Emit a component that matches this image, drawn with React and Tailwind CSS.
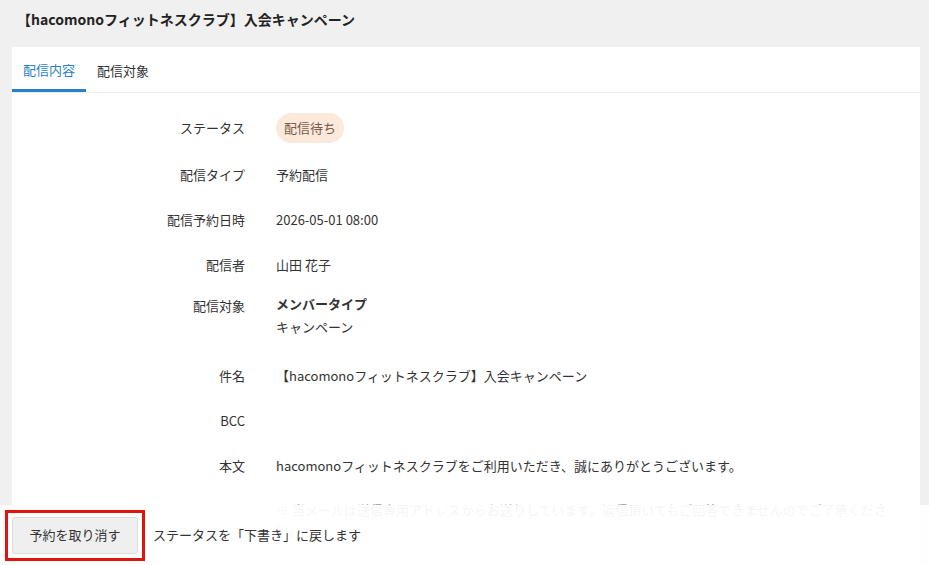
import React from 'react';

const rows = [
  { label: 'ステータス', value: <span className="inline-block rounded-full bg-[#fbe9dc] px-2 py-[5px] text-[#7a5a48]">配信待ち</span>, h: 'h-[48px]' },
  { label: '配信タイプ', value: '予約配信' },
  { label: '配信予約日時', value: '2026-05-01 08:00' },
  { label: '配信者', value: '山田 花子' },
];

const Row = ({ label, children, h = 'h-[45px]' }) => (
  <div className={`flex items-center ${h}`}>
    <div className="w-[233px] text-right">{label}</div>
    <div className="pl-[31px]">{children}</div>
  </div>
);

const App = () => {
  return (
    <div className="relative h-[565px] w-[929px] overflow-hidden bg-[#f0f0f0] text-[13px] text-[#333]" style={{ fontFamily: '"Noto Sans CJK JP", "Noto Sans", sans-serif' }}>
      <div className="h-[47px] px-[17px] pt-[9px] text-[14px] font-bold text-[#222]">【hacomonoフィットネスクラブ】入会キャンペーン</div>
      <div className="mx-[12px] mr-[9px] bg-white">
        <div className="flex h-[46px] border-b border-[#eee]">
          <div className="flex w-[74px] items-center justify-center border-b-[3px] border-[#2a7fc9] pt-[3px] text-[#2a7fc9]">配信内容</div>
          <div className="flex items-center px-[11px] pt-[3px]">配信対象</div>
        </div>
        <div className="pt-[11px] pb-[40px]">
          {rows.map((r) => (
            <Row key={r.label} label={r.label} h={r.h}>{r.value}</Row>
          ))}
          <div className="flex pt-[9px] pb-[15px]">
            <div className="w-[233px] text-right">配信対象</div>
            <div className="pl-[31px] leading-[23px]">
              <div className="-mt-[4px] font-bold">メンバータイプ</div>
              <div>キャンペーン</div>
            </div>
          </div>
          <Row label="件名">【hacomonoフィットネスクラブ】入会キャンペーン</Row>
          <Row label="BCC"></Row>
          <Row label="本文">hacomonoフィットネスクラブをご利用いただき、誠にありがとうございます。</Row>
          <div className="pl-[264px] pr-[20px] pt-[12px] text-[#999]">※ 当メールは送信専用アドレスからお送りしています。返信頂いてもご回答できませんのでご了承ください。</div>
        </div>
      </div>
      <div className="absolute bottom-0 left-0 right-0 flex h-[60px] items-center bg-white/90 pl-[5px]">
        <div className="border-[3px] border-[#e0140f] p-[4px]">
          <button className="h-[37px] w-[126px] rounded-[3px] border border-[#ddd] bg-[#efefef] text-[13px] text-[#333]">予約を取り消す</button>
        </div>
        <span className="pl-[8px]">ステータスを「下書き」に戻します</span>
      </div>
    </div>
  );
};

export default App;
